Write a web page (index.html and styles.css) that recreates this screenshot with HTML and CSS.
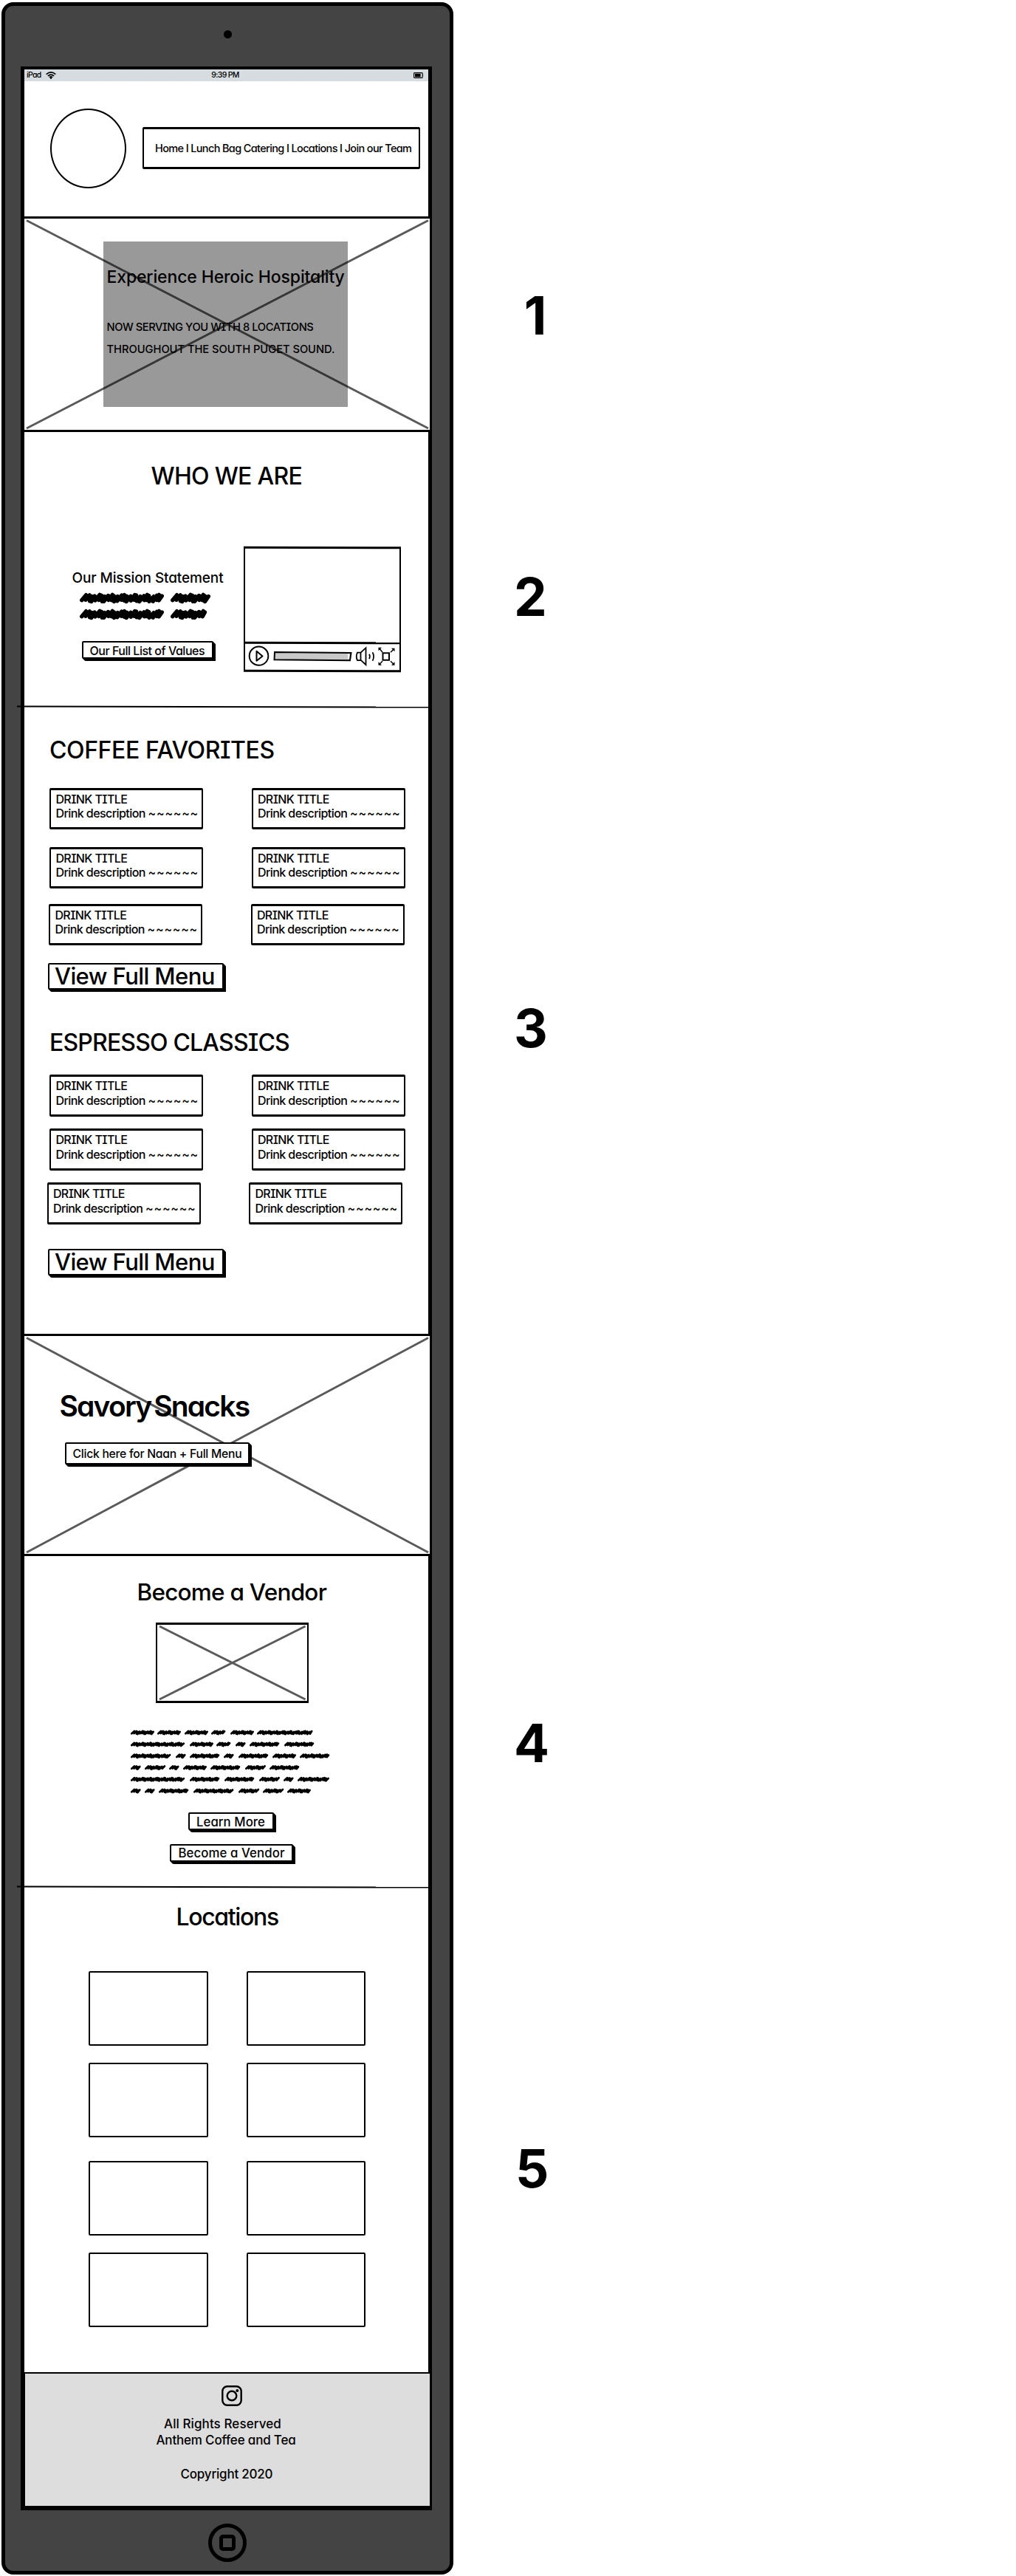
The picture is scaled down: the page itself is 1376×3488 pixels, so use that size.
FILE: index.html
```
<!DOCTYPE html>
<html lang="en">
<head>
<meta charset="utf-8">
<title>Anthem Coffee and Tea wireframe</title>
<link rel="stylesheet" href="styles.css">
</head>
<body>
<main class="board">
  <div class="device">
    <div class="bezel-top"><span class="camera"></span></div>
    <div class="screen">
      <div class="status">
        <span class="status-side">iPad
          <svg class="wifi" viewBox="0 0 14 10"><g fill="none" stroke="#000" stroke-width="1.7"><path d="M.7 3.6Q7-1.8 13.3 3.6"/><path d="M2.9 5.8Q7 2.3 11.1 5.8"/><path d="M4.9 7.8Q7 6 9.1 7.8"/></g><circle cx="7" cy="8.9" r="1.1"/></svg>
        </span>
        <span>9:39 PM</span>
        <span class="status-side end"><svg class="battery" viewBox="0 0 14 8"><rect x=".6" y=".6" width="11.6" height="6.8" rx=".8" fill="none" stroke="#000" stroke-width="1.1"/><rect x="2" y="1.8" width="7.6" height="4.4"/><path d="M12.6 2.2q1.4 1.8 0 3.6z"/></svg></span>
      </div>

      <header class="header">
        <div class="logo"></div>
        <nav class="nav box">Home I Lunch Bag Catering I Locations I Join our Team</nav>
      </header>

      <section class="hero picture">
        <svg class="cross" viewBox="0 0 553 292" preserveAspectRatio="none"><path d="M5 5.5 549 287M549 5.5 5 287"/></svg>
        <div class="hero-card">
          <h1>Experience Heroic Hospitality</h1>
          <p class="serving">NOW SERVING YOU WITH 8 LOCATIONS</p>
          <p class="region">THROUGHOUT THE SOUTH PUGET SOUND.</p>
        </div>
      </section>

      <section class="about">
        <h2>WHO WE ARE</h2>
        <div class="about-row">
          <div class="mission">
            <h3>Our Mission Statement</h3>
            <svg class="scribble big" viewBox="0 0 184 42" data-step="3.1" data-amp="4.6" data-stroke="5.4" data-rows="10:1-115,124-179;32:1-115,124-175"></svg>
            <div class="button values">Our Full List of Values</div>
          </div>
          <div class="video">
            <div class="video-view"></div>
            <svg class="controls" viewBox="0 0 213 36">
              <g fill="none" stroke="#000" stroke-width="2">
                <ellipse cx="20.5" cy="17.5" rx="12.8" ry="12.6"/>
                <path d="M17.5 11v13l8-6.3z" stroke-linejoin="round"/>
                <path d="M42 12.2 145.5 12.8 144 23 41.5 22.4z" fill="#c8c8c8"/>
                <path d="M142 14v7" stroke="#fff"/>
                <path d="M154 12.5q-2.5 5.5 0 10.5h4.5v-10.5zM158.5 12.5l7-6.5v23l-7-6.5" stroke-width="1.8"/>
                <path d="M170 14.5q1.8 3 0 6.500M174.500 12q3.200 5.500 0 11.500" stroke-width="1.7"/>
                <rect x="188.5" y="13" width="8.5" height="9.5"/>
                <path d="M184 7l4 5M203 8l-4 4M184 28l4-4M203 28l-4-4" stroke-width="1.5"/>
              </g>
              <path d="M182.500 5.500h4.500l-4.500 4.500zM204.500 6.500h-4.500l4.500 4.500zM182.500 29.500h4.500l-4.500-4.500zM204.500 29.500h-4.500l4.500-4.500z"/>
            </svg>
          </div>
        </div>
      </section>

      <section class="menu">
        <div class="divider"></div>
        <h2 class="coffee-title">COFFEE FAVORITES</h2>
        <div class="cards coffee">
          <div class="row">
            <div class="drink box"><p class="name">DRINK TITLE</p><p class="desc">Drink description <i>~~~~~~</i></p></div>
            <div class="drink box"><p class="name">DRINK TITLE</p><p class="desc">Drink description <i>~~~~~~</i></p></div>
          </div>
          <div class="row">
            <div class="drink box"><p class="name">DRINK TITLE</p><p class="desc">Drink description <i>~~~~~~</i></p></div>
            <div class="drink box"><p class="name">DRINK TITLE</p><p class="desc">Drink description <i>~~~~~~</i></p></div>
          </div>
          <div class="row">
            <div class="drink box"><p class="name">DRINK TITLE</p><p class="desc">Drink description <i>~~~~~~</i></p></div>
            <div class="drink box"><p class="name">DRINK TITLE</p><p class="desc">Drink description <i>~~~~~~</i></p></div>
          </div>
        </div>
        <div class="button full-menu">View Full Menu</div>
        <h2 class="espresso-title">ESPRESSO CLASSICS</h2>
        <div class="cards espresso">
          <div class="row">
            <div class="drink box"><p class="name">DRINK TITLE</p><p class="desc">Drink description <i>~~~~~~</i></p></div>
            <div class="drink box"><p class="name">DRINK TITLE</p><p class="desc">Drink description <i>~~~~~~</i></p></div>
          </div>
          <div class="row">
            <div class="drink box"><p class="name">DRINK TITLE</p><p class="desc">Drink description <i>~~~~~~</i></p></div>
            <div class="drink box"><p class="name">DRINK TITLE</p><p class="desc">Drink description <i>~~~~~~</i></p></div>
          </div>
          <div class="row">
            <div class="drink box"><p class="name">DRINK TITLE</p><p class="desc">Drink description <i>~~~~~~</i></p></div>
            <div class="drink box"><p class="name">DRINK TITLE</p><p class="desc">Drink description <i>~~~~~~</i></p></div>
          </div>
        </div>
        <div class="button full-menu last">View Full Menu</div>
      </section>

      <section class="snacks picture">
        <svg class="cross" viewBox="0 0 553 301" preserveAspectRatio="none"><path d="M5 5.500 549 296M549 5.500 5 296"/></svg>
        <h2>Savory Snacks</h2>
        <div class="button naan">Click here for Naan + Full Menu</div>
      </section>

      <section class="vendor">
        <h2>Become a Vendor</h2>
        <div class="thumb picture"><svg class="cross" viewBox="0 0 208 109" preserveAspectRatio="none"><path d="M5 5 203 104M203 5 5 104"/></svg></div>
        <svg class="scribble small" viewBox="0 0 274 92" data-step="1.9" data-amp="2.1" data-stroke="2.8" data-rows="5:0-32,36-68,73-105,109-130,135-167,171-247;20.9:0-75,80-112,116-137,142-156,161-203,208-250;36.7:0-56,61-75,80-122,126-140,146-187,192-224,229-271;52.5:0-14,19-48,52-66,71-103,108-150,155-183,188-230;68.3:0-75,80-122,127-169,174-202,207-221,226-269;84:0-14,19-33,38-80,85-141,146-175,179-208,212-244"></svg>
        <div class="button learn">Learn More</div>
        <div class="button become">Become a Vendor</div>
      </section>

      <section class="locations">
        <div class="divider"></div>
        <h2>Locations</h2>
        <div class="places">
          <div class="place box"></div><div class="place box"></div>
          <div class="place box"></div><div class="place box"></div>
        </div>
        <div class="places second">
          <div class="place box"></div><div class="place box"></div>
          <div class="place box"></div><div class="place box"></div>
        </div>
      </section>

      <footer class="footer">
        <svg class="instagram" viewBox="0 0 28 28"><g fill="none" stroke="#000" stroke-width="2.4"><rect x="1.3" y="1.3" width="25.4" height="25.4" rx="6.5"/><circle cx="14" cy="14" r="6.3"/></g><circle cx="21.3" cy="7" r="2"/></svg>
        <p class="rights">All Rights Reserved</p>
        <p class="company">Anthem Coffee and Tea</p>
        <p class="copyright">Copyright 2020</p>
      </footer>
    </div>
    <div class="bezel-bottom"><span class="home"><span class="home-mark"></span></span></div>
  </div>

  <aside class="notes">
    <span class="note n1">1</span>
    <span class="note n2">2</span>
    <span class="note n3">3</span>
    <span class="note n4">4</span>
    <span class="note n5">5</span>
  </aside>
</main>
<script src="scribble.js"></script>
</body>
</html>
```
FILE: scribble.js
```
// Fills each .scribble svg with zigzag strokes, one path per word.
// data-rows holds "centreY:x1-x2,x1-x2;..." for every line of words.
document.querySelectorAll('.scribble').forEach(function (svg) {
  var step = +svg.dataset.step, amp = +svg.dataset.amp, width = +svg.dataset.stroke;
  svg.dataset.rows.split(';').forEach(function (row) {
    var parts = row.split(':'), y = +parts[0];
    parts[1].split(',').forEach(function (word) {
      var ends = word.split('-').map(Number);
      var x = ends[0] + width / 2, right = ends[1] - width / 2, i = 0;
      var d = 'M' + x + ' ' + (y + amp * 0.6);
      while (x < right - step) {
        i += 1;
        x += step * (i % 2 ? 1.5 + 0.5 * Math.sin(i * 0.9) : -0.1 + 0.3 * Math.sin(i * 1.7));
        var reach = amp * (0.75 + 0.25 * Math.sin(i * 2.3));
        d += 'L' + Math.min(x, right).toFixed(1) + ' ' + (y + (i % 2 ? -reach : reach)).toFixed(1);
      }
      var path = document.createElementNS('http://www.w3.org/2000/svg', 'path');
      path.setAttribute('d', d);
      path.setAttribute('stroke-width', width);
      svg.appendChild(path);
    });
  });
});
```
FILE: styles.css
```
* { box-sizing: border-box; }
body { margin: 0; background: #fff; color: #000; font-family: Inter, "Open Sans", sans-serif; font-weight: 500; line-height: 1; font-feature-settings: "cv11", "cv08"; }
h1, h2, h3, p { margin: 0; font-weight: 500; white-space: nowrap; }
svg { display: block; }
.board { display: flex; align-items: flex-start; height: 3488px; overflow: hidden; }

/* tablet frame */
.device { width: 612px; height: 3482.5px; margin: 3px 0 0 2px; flex: none; background: #444; border: 5px solid #000; border-radius: 16px; display: flex; flex-direction: column; }
.bezel-top { height: 82px; display: flex; justify-content: center; padding-top: 32.5px; }
.camera { width: 11px; height: 11px; border-radius: 50%; background: #000; }
.screen { width: 557px; height: 3309px; margin-left: 21px; flex: none; background: #fff; border: 5px solid #000; border-top-width: 4px; border-bottom-width: 4px; }
.bezel-bottom { flex: 1; display: flex; justify-content: center; padding-top: 17.5px; }
.home { width: 52px; height: 52px; border: 5px solid #000; border-radius: 50%; display: flex; align-items: center; justify-content: center; }
.home-mark { width: 22px; height: 22px; border: 5px solid #000; border-radius: 5px; }

/* shared pieces */
.box { border: solid #000; border-width: 3px 2px; border-radius: 2px; background: #fff; }
.button { background: #fff; border: 2px solid #000; border-radius: 2px 2px 0 2px; box-shadow: 1px 1px 0 #000, 2px 2px 0 #000, 3px 3px 0 #000; white-space: nowrap; }
.picture { position: relative; border: solid #000; border-width: 3px 2px; background: #fff; }
.cross { position: absolute; left: -2px; top: -3px; width: calc(100% + 4px); height: calc(100% + 6px); fill: none; stroke: #5a5a5a; stroke-width: 2.9; }
.divider { width: 557px; height: 2px; margin-left: -10px; background: #000; transform: rotate(.12deg); position: relative; }
.scribble path { fill: none; stroke: #000; stroke-linecap: round; stroke-linejoin: round; }

.status { height: 16px; background: #d6dcdf; display: flex; align-items: center; justify-content: space-between; padding: 0 6px 0 3px; font-size: 10.5px; letter-spacing: -.065em; white-space: nowrap; }
.status-side { display: flex; align-items: center; gap: 6px; width: 96px; }
.end { justify-content: flex-end; }
.wifi { width: 14px; height: 10px; }
.battery { width: 14px; height: 8px; }

.header { height: 183px; display: flex; align-items: flex-start; padding: 37px 0 0 35px; }
.logo { width: 103px; height: 108px; border: 2px solid #000; border-radius: 50%; }
.nav { width: 375.5px; height: 57px; margin: 25px 0 0 22px; padding: 18px 0 0 15px; font-size: 14.5px; line-height: 15px; letter-spacing: -.044em; white-space: nowrap; font-feature-settings: "cv11"; }

.hero { width: 553px; height: 292px; margin-left: -2px; padding: 31px 0 0 107px; }
.hero-card { position: relative; width: 331px; height: 224px; background: rgba(0,0,0,.4); padding: 36.5px 0 0 4.5px; }
.hero-card h1 { font-size: 23px; letter-spacing: -.006em; }
.serving { margin-top: 49px; font-size: 14.7px; letter-spacing: -.028em; }
.region { margin-top: 15.3px; font-size: 14.7px; letter-spacing: -.002em; }

.about { height: 371px; padding-top: 44px; }
.about h2 { margin-left: 171.5px; font-size: 32px; letter-spacing: -.022em; }
.about-row { display: flex; align-items: flex-start; margin: 79px 0 0 64.5px; }
.mission { width: 232.5px; padding-top: 33.4px; }
.mission h3 { font-size: 19px; letter-spacing: -.006em; }
.big { width: 184px; height: 42px; margin: 8px 0 0 9.5px; }
.values { width: 177.5px; height: 24px; margin: 25.5px 0 0 13.5px; padding: 3.6px 0 0 8.5px; font-size: 16px; letter-spacing: -.03em; }
.video { width: 213px; height: 170px; border: solid #000; border-width: 3px 2px; display: flex; flex-direction: column; transform: skewY(.2deg); }
.video-view { height: 133px; border-bottom: 3px solid #000; }
.controls { width: 213px; height: 36px; margin-left: -2px; flex: none; margin-top: -1px; }

.menu { height: 850px; }
.menu h2 { font-size: 32px; margin-left: 34px; }
.coffee-title { margin-top: 42.4px; letter-spacing: -.013em; }
.espresso-title { margin-top: 56px; letter-spacing: -.026em; }
.row { display: flex; gap: 65.5px; margin-left: 34px; }
.drink { width: 208px; height: 56.5px; padding: 2.7px 0 0 6.4px; font-size: 16px; line-height: 19.5px; }
.name { letter-spacing: -.036em; }
.desc { letter-spacing: -.035em; }
.desc i { font-style: normal; letter-spacing: .045em; }
.coffee { margin-top: 34.6px; display: flex; flex-direction: column; }
.coffee .row + .row { margin-top: 23.5px; }
.coffee .row:last-child { margin: 20.5px 0 0 33px; }
.espresso { margin-top: 27px; display: flex; flex-direction: column; gap: 16.5px; }
.espresso .row:last-child { margin-left: 30.5px; }
.full-menu { width: 238.5px; height: 36px; margin: 24px 0 0 31.500px; padding-left: 7.500px; font-size: 31px; line-height: 31.500px; letter-spacing: -.019em; }
.last { margin-top: 33.5px; }

.snacks { width: 553px; height: 301px; margin-left: -2px; padding: 75px 0 0 47.500px; }
.snacks h2 { position: relative; font-size: 39px; font-weight: 600; letter-spacing: -.046em; word-spacing: -.11em; }
.naan { position: relative; width: 249.5px; height: 30px; margin: 30px 0 0 7.5px; padding: 6px 0 0 8.500px; font-size: 15.7px; letter-spacing: -.016em; }

.vendor { height: 447px; padding-top: 33px; }
.vendor h2 { margin-left: 152.5px; font-size: 31.5px; letter-spacing: -.024em; }
.thumb { width: 207.5px; height: 109px; margin: 25.5px 0 0 177.500px; }
.small { width: 274px; height: 92px; margin: 34.500px 0 0 144px; }
.learn { width: 116px; height: 23.5px; margin: 21.5px 0 0 222px; padding: 2.5px 0 0 9px; font-size: 16.800px; letter-spacing: .003em; }
.become { width: 167px; height: 24px; margin: 19px 0 0 197px; padding: 2.4px 0 0 9.500px; font-size: 16.800px; letter-spacing: .005em; }

.locations { height: 658px; }
.locations h2 { margin: 24.4px 0 0 205.500px; font-size: 32px; letter-spacing: -.042em; }
.places { display: grid; grid-template-columns: 161.500px 161.500px; gap: 23.500px 52px; margin: 56.600px 0 0 87px; }
.second { margin-top: 31.500px; }
.place { height: 101px; border-width: 2px; }

.footer { width: 552px; height: 183px; border: 2px solid #000; background: #ddd; margin-left: -1px; padding-top: 16px; font-size: 17px; }
.instagram { width: 28px; height: 28px; margin-left: 266px; }
.rights { margin: 15.800px 0 0 188px; letter-spacing: .005em; }
.company { margin: 5px 0 0 177.500px; letter-spacing: -.011em; }
.copyright { margin: 29.300px 0 0 210.500px; letter-spacing: -.012em; }

/* section numbers beside the device */
.notes { display: flex; flex-direction: column; width: 60px; margin-left: 82px; }
.note { font-size: 71px; font-weight: 700; text-align: center; width: 44px; }
.n1 { margin: 392px 0 0 7px; }
.n2 { margin-top: 309.500px; }
.n3 { margin-top: 513px; }
.n4 { margin-top: 897px; }
.n5 { margin: 505.500px 0 0 2px; }
```
